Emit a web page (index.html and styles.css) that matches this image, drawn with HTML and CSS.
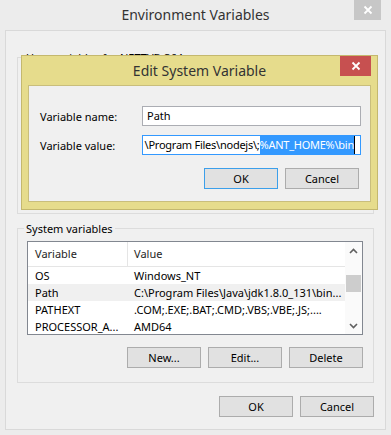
FILE: index.html
```html
<!DOCTYPE html>
<html lang="en">

<head>
    <meta charset="UTF-8">
    <title>Environment Variables</title>
    <link rel="stylesheet" href="styles.css">
</head>

<body>
    <div class="window">
        <!-- Main window title -->
        <div class="titlebar">
            <span></span>
            <span class="title">Environment Variables</span>
            <button class="close close-gray" aria-label="Close">
                <svg width="10" height="10" viewBox="0 0 10 10"><path d="M1.5 1.5 L8.5 8.5 M8.5 1.5 L1.5 8.5" stroke="#fff" stroke-width="1.8"/></svg>
            </button>
        </div>

        <div class="panel">
            <div class="group user-group">
                <span class="legend">User variables for NETTVB-364</span>
            </div>

            <div class="group system-group">
                <span class="legend">System variables</span>
                <div class="listbox">
                    <div class="list">
                        <div class="list-row list-head">
                            <div class="cell col-name">Variable</div>
                            <div class="cell">Value</div>
                        </div>
                        <div class="list-row">
                            <div class="cell col-name">OS</div>
                            <div class="cell">Windows_NT</div>
                        </div>
                        <div class="list-row selected">
                            <div class="cell col-name">Path</div>
                            <div class="cell">C:\Program Files\Java\jdk1.8.0_131\bin...</div>
                        </div>
                        <div class="list-row">
                            <div class="cell col-name">PATHEXT</div>
                            <div class="cell">.COM;.EXE;.BAT;.CMD;.VBS;.VBE;.JS;....</div>
                        </div>
                        <div class="list-row">
                            <div class="cell col-name">PROCESSOR_A...</div>
                            <div class="cell">AMD64</div>
                        </div>
                    </div>
                    <div class="scrollbar">
                        <div class="arrow">
                            <svg width="9" height="6" viewBox="0 0 9 6"><path d="M1 5 L4.5 1.5 L8 5" fill="none" stroke="#606060" stroke-width="1.6"/></svg>
                        </div>
                        <div class="track"><div class="thumb"></div></div>
                        <div class="arrow">
                            <svg width="9" height="6" viewBox="0 0 9 6"><path d="M1 1 L4.5 4.5 L8 1" fill="none" stroke="#606060" stroke-width="1.6"/></svg>
                        </div>
                    </div>
                </div>
                <div class="buttons">
                    <button class="btn">New...</button>
                    <button class="btn">Edit...</button>
                    <button class="btn">Delete</button>
                </div>
            </div>

            <div class="buttons actions">
                <button class="btn">OK</button>
                <button class="btn">Cancel</button>
            </div>
        </div>

        <!-- Modal dialog on top of the window -->
        <div class="dialog">
            <div class="titlebar dlg-titlebar">
                <span></span>
                <span class="title">Edit System Variable</span>
                <button class="close close-red" aria-label="Close">
                    <svg width="10" height="10" viewBox="0 0 10 10"><path d="M1.5 1.5 L8.5 8.5 M8.5 1.5 L1.5 8.5" stroke="#fff" stroke-width="1.8"/></svg>
                </button>
            </div>
            <div class="dlg-body">
                <div class="form">
                    <label>Variable name:</label>
                    <div class="input">Path</div>
                    <label>Variable value:</label>
                    <div class="input focused">
                        <span>\Program Files\nodejs\;</span><span class="sel">%ANT_HOME%\bin</span><span class="caret"></span>
                    </div>
                </div>
                <div class="buttons dlg-buttons">
                    <button class="btn default">OK</button>
                    <button class="btn">Cancel</button>
                </div>
            </div>
        </div>
    </div>
</body>

</html>
```

FILE: styles.css
```css
/* Reset */
* {
    margin: 0;
    padding: 0;
    box-sizing: border-box;
}

body {
    font-family: "Segoe UI", "Noto Sans", "Open Sans", sans-serif;
    font-size: 11px;
    color: #000;
    background-color: #ececec;
}

.window {
    position: relative;
    width: 391px;
    height: 435px;
    background-color: #ececec;
}

/* Title bars */
.titlebar {
    display: grid;
    grid-template-columns: 1fr auto 1fr;
    height: 30px;
}

.title {
    font-size: 14px;
    line-height: 29px;
    color: #333;
}

.close {
    justify-self: end;
    align-self: start;
    display: flex;
    align-items: center;
    justify-content: center;
    border: none;
    height: 20px;
}

.close-gray {
    width: 27px;
    margin-right: 10px;
    background-color: #c7c7c7;
}

.close-red {
    width: 31px;
    background-color: #c75050;
}

/* Main panel */
.panel {
    height: 400px;
    margin: 0 5px;
    padding: 26px 11px 0;
    border: 1px solid #d9d9d9;
    background-color: #f0f0f0;
}

.group {
    border: 1px solid #dcdcdc;
}

.user-group {
    height: 157px;
    margin-bottom: 14px;
}

.system-group {
    padding-bottom: 14px;
}

.legend {
    display: table;
    margin: -8px 0 0 6px;
    padding: 0 2px;
    line-height: 16px;
    background-color: #f0f0f0;
}

/* List view */
.listbox {
    display: flex;
    width: 336px;
    height: 94px;
    margin: 4px 0 0 9px;
    border: 1px solid #828790;
    background-color: #fff;
    overflow: hidden;
}

.list {
    flex: 1;
}

.list-row {
    display: grid;
    grid-template-columns: 100px 1fr;
    height: 17px;
    line-height: 17px;
    white-space: nowrap;
}

.list-row .cell {
    overflow: hidden;
    padding-left: 6px;
}

.list-row .col-name {
    padding-left: 7px;
}

.list-head {
    height: 25px;
    line-height: 24px;
    border-bottom: 1px solid #e5e5e5;
    color: #1e1e1e;
}

.list-head .col-name {
    border-right: 1px solid #e5e5e5;
}

.list-row.selected {
    background-color: #f0f0f0;
}

.scrollbar {
    display: flex;
    flex-direction: column;
    width: 17px;
    background-color: #fafafa;
}

.arrow {
    height: 17px;
    display: flex;
    align-items: center;
    justify-content: center;
}

.track {
    flex: 1;
    padding: 16px 1px 0;
}

.thumb {
    height: 17px;
    background-color: #cdcdcd;
}

/* Buttons */
.buttons {
    display: flex;
    justify-content: flex-end;
    gap: 7px;
}

.system-group .buttons {
    margin-top: 12px;
    padding-right: 10px;
}

.actions {
    margin-top: 13px;
}

.btn {
    width: 74px;
    height: 21px;
    border: 1px solid #acacac;
    background-color: #e1e1e1;
    font: inherit;
    color: #000;
}

.btn.default {
    border-color: #3c9fea;
}

/* Edit dialog */
.dialog {
    position: absolute;
    left: 21px;
    top: 55px;
    width: 357px;
    height: 155px;
    padding: 0 6px 7px;
    border: 1px solid #c4b86e;
    background-color: #e6dc8c;
}

.dlg-titlebar {
    height: 29px;
}

.dlg-body {
    padding: 20px 9px 12px 11px;
    border: 1px solid #c9be7c;
    background-color: #f0f0f0;
}

.form {
    display: grid;
    grid-template-columns: 102px 1fr;
    row-gap: 9px;
    align-items: center;
}

.input {
    height: 20px;
    padding: 0 4px;
    border: 1px solid #abadb3;
    background-color: #fff;
    line-height: 18px;
    white-space: nowrap;
    overflow: hidden;
}

.input.focused {
    display: flex;
    justify-content: flex-end;
    padding-right: 5px;
    border-color: #3399ff;
    letter-spacing: -0.25px;
}

.input .sel {
    background-color: #3399ff;
    color: #fff;
}

.caret {
    width: 1px;
    flex-shrink: 0;
    background-color: #000;
}

.dlg-buttons {
    margin-top: 13px;
    padding-right: 2px;
}
```
